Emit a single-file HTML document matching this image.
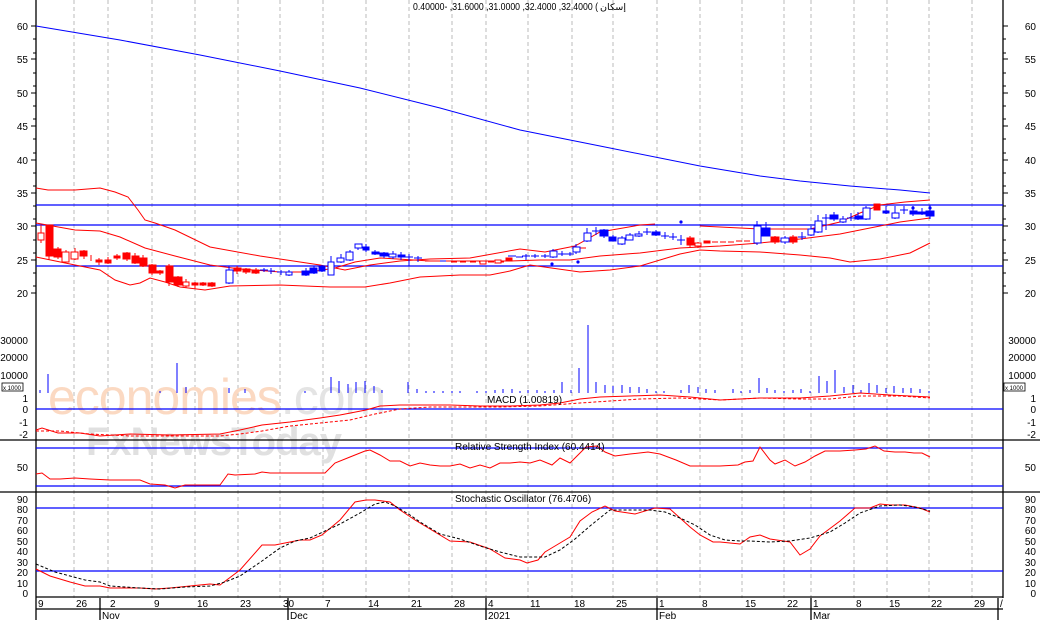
<!DOCTYPE html>
<html><head><meta charset="utf-8"><style>
html,body{margin:0;padding:0;background:#fff;width:1040px;height:620px;overflow:hidden}
svg{display:block}
text{font-family:"Liberation Sans","Noto Sans CJK SC",sans-serif;font-size:10px;fill:#000}
</style></head><body>
<svg width="1040" height="620" viewBox="0 0 1040 620" xmlns="http://www.w3.org/2000/svg">
<g stroke="#bbb" stroke-width="1" stroke-dasharray="4,3">
<line x1="74" y1="0" x2="74" y2="598"/><line x1="108" y1="0" x2="108" y2="598"/><line x1="152" y1="0" x2="152" y2="598"/><line x1="195" y1="0" x2="195" y2="598"/><line x1="238" y1="0" x2="238" y2="598"/><line x1="280" y1="0" x2="280" y2="598"/><line x1="323" y1="0" x2="323" y2="598"/><line x1="366" y1="0" x2="366" y2="598"/><line x1="409" y1="0" x2="409" y2="598"/><line x1="452" y1="0" x2="452" y2="598"/><line x1="486" y1="0" x2="486" y2="598"/><line x1="528" y1="0" x2="528" y2="598"/><line x1="572" y1="0" x2="572" y2="598"/><line x1="613" y1="0" x2="613" y2="598"/><line x1="657" y1="0" x2="657" y2="598"/><line x1="700" y1="0" x2="700" y2="598"/><line x1="742" y1="0" x2="742" y2="598"/><line x1="784" y1="0" x2="784" y2="598"/><line x1="811" y1="0" x2="811" y2="598"/><line x1="854" y1="0" x2="854" y2="598"/><line x1="887" y1="0" x2="887" y2="598"/><line x1="929" y1="0" x2="929" y2="598"/><line x1="972" y1="0" x2="972" y2="598"/>
</g>
<text x="48" y="414" style="font-size:50px;fill:#fbd9c2;letter-spacing:-1px">economies<tspan style="fill:#e4e4e4">.com</tspan></text>
<text x="86" y="455" style="font-size:40px;fill:#e0e0e0;font-weight:bold;letter-spacing:-1px">FxNewsToday</text>

<g stroke="#000" stroke-width="1.3" fill="none">
<line x1="36" y1="0" x2="36" y2="620"/>
<line x1="1003" y1="0" x2="1003" y2="598"/>
<line x1="0" y1="440" x2="1040" y2="440"/>
<line x1="0" y1="492" x2="1040" y2="492"/>
<line x1="36" y1="597" x2="1003" y2="597"/>
<line x1="36" y1="609" x2="1003" y2="609"/>
<line x1="100" y1="598" x2="100" y2="620"/><line x1="288" y1="598" x2="288" y2="620"/><line x1="486" y1="598" x2="486" y2="620"/><line x1="657" y1="598" x2="657" y2="620"/><line x1="811" y1="598" x2="811" y2="620"/><line x1="998" y1="598" x2="998" y2="620"/>
</g>
<g stroke="#000" stroke-width="1">
<path d="M31 26h5M31 59h5M31 93h5M31 126h5M31 160h5M31 193h5M31 226h5M31 260h5M31 293h5M1003 26h5M1003 59h5M1003 93h5M1003 126h5M1003 160h5M1003 193h5M1003 226h5M1003 260h5M1003 293h5"/>
<path d="M33 39h3M33 53h3M33 73h3M33 86h3M33 106h3M33 119h3M33 139h3M33 153h3M33 173h3M33 186h3M33 206h3M33 219h3M33 240h3M33 253h3M33 273h3M33 286h3M1003 39h3M1003 53h3M1003 73h3M1003 86h3M1003 106h3M1003 119h3M1003 139h3M1003 153h3M1003 173h3M1003 186h3M1003 206h3M1003 219h3M1003 240h3M1003 253h3M1003 273h3M1003 286h3"/>
</g>
<g text-anchor="end">
<text x="28" y="30">60</text><text x="28" y="63">55</text><text x="28" y="97">50</text><text x="28" y="130">45</text><text x="28" y="164">40</text><text x="28" y="197">35</text><text x="28" y="230">30</text><text x="28" y="264">25</text><text x="28" y="297">20</text>
<text x="1036" y="30">60</text><text x="1036" y="63">55</text><text x="1036" y="97">50</text><text x="1036" y="130">45</text><text x="1036" y="164">40</text><text x="1036" y="197">35</text><text x="1036" y="230">30</text><text x="1036" y="264">25</text><text x="1036" y="297">20</text>
<text x="28" y="344">30000</text><text x="28" y="361">20000</text><text x="28" y="379">10000</text>
<text x="28" y="402">1</text><text x="28" y="413">0</text><text x="28" y="426">-1</text><text x="28" y="438">-2</text>
<text x="28" y="471">50</text>
<text x="1036" y="344">30000</text><text x="1036" y="361">20000</text><text x="1036" y="379">10000</text>
<text x="1036" y="402">1</text><text x="1036" y="413">0</text><text x="1036" y="426">-1</text><text x="1036" y="438">-2</text>
<text x="1036" y="471">50</text>
</g>
<rect x="2" y="383" width="21" height="8" fill="#fff" stroke="#000" stroke-width="0.8"/><text x="3" y="390" style="font-size:6px">x 1000</text>
<rect x="1004" y="383" width="21" height="8" fill="#fff" stroke="#000" stroke-width="0.8"/><text x="1005" y="390" style="font-size:6px">x 1000</text>
<g text-anchor="end" style="font-size:9.5px">
<text x="28" y="503">90</text><text x="28" y="513">80</text><text x="28" y="524">70</text><text x="28" y="534">60</text><text x="28" y="545">50</text><text x="28" y="555">40</text><text x="28" y="566">30</text><text x="28" y="576">20</text><text x="28" y="587">10</text><text x="28" y="597">0</text>
<text x="1036" y="503">90</text><text x="1036" y="513">80</text><text x="1036" y="524">70</text><text x="1036" y="534">60</text><text x="1036" y="545">50</text><text x="1036" y="555">40</text><text x="1036" y="566">30</text><text x="1036" y="576">20</text><text x="1036" y="587">10</text><text x="1036" y="597">0</text>
</g>
<g style="font-size:10px">
<text x="38" y="607">9</text><text x="76" y="607">26</text><text x="110" y="607">2</text><text x="154" y="607">9</text><text x="197" y="607">16</text><text x="240" y="607">23</text><text x="283" y="607">30</text><text x="325" y="607">7</text><text x="368" y="607">14</text><text x="411" y="607">21</text><text x="454" y="607">28</text><text x="488" y="607">4</text><text x="530" y="607">11</text><text x="574" y="607">18</text><text x="616" y="607">25</text><text x="659" y="607">1</text><text x="702" y="607">8</text><text x="745" y="607">15</text><text x="787" y="607">22</text><text x="813" y="607">1</text><text x="856" y="607">8</text><text x="889" y="607">15</text><text x="931" y="607">22</text><text x="974" y="607">29</text><text x="1000" y="607">/</text>
<text x="102" y="619">Nov</text><text x="290" y="619">Dec</text><text x="488" y="619">2021</text><text x="659" y="619">Feb</text><text x="813" y="619">Mar</text>
</g>
<text x="413" y="10" textLength="185" lengthAdjust="spacingAndGlyphs">0.40000- ,31.6000 ,31.0000 ,32.4000 ,32.4000 (</text>
<text x="600" y="10" textLength="26" lengthAdjust="spacingAndGlyphs" style="font-family:'DejaVu Sans',sans-serif;font-size:9px">إسكان</text>

<g stroke="#0000ff" stroke-width="1.3">
<line x1="36" y1="205" x2="1003" y2="205"/><line x1="36" y1="225" x2="1003" y2="225"/><line x1="36" y1="266" x2="1003" y2="266"/>
<line x1="36" y1="409" x2="1003" y2="409"/>
<line x1="36" y1="448" x2="1003" y2="448"/><line x1="36" y1="486" x2="1003" y2="486"/>
<line x1="36" y1="508" x2="1003" y2="508"/><line x1="36" y1="571" x2="1003" y2="571"/>
</g>
<polyline fill="none" stroke="#0000ff" stroke-width="1" points="36,26 120,40 200,55 280,71 360,88 440,108 520,130 600,146 700,166 760,176 800,181 850,186 900,190 930,193"/>
<g fill="none" stroke="#ff0000" stroke-width="1">
<polyline points="36,188 48,190 75,190 100,188 115,192 128,197 138,210 145,220 155,223 175,230 210,247 260,256 300,262 320,265 345,270 370,265 400,261 430,259 470,258 520,249 545,252 575,246 600,232 640,225 655,224"/>
<polyline points="700,226 760,229 810,229 840,222 860,213 880,205 905,202 930,200"/>
<polyline points="36,223 75,230 100,231 120,237 145,248 175,256 210,265 240,269 280,272 310,272 335,268 355,262 380,258 430,261 470,261 510,261 540,260 570,260 600,256 640,253 680,248 720,246 760,243 800,239 840,234 870,228 900,222 930,218"/>
<polyline points="36,257 75,265 100,270 115,280 130,285 140,283 150,278 165,282 180,287 205,290 230,286 280,285 330,287 365,287 390,283 420,277 460,275 490,275 510,271 530,265 580,272 610,270 640,266 680,254 700,250 720,251 760,252 800,255 830,258 850,262 880,259 910,253 930,243"/>
</g>
<g stroke="#ff0000" stroke-width="1">
<path d="M41 225v18M49 225v35M58 247v12M66 250v12M75 248v12M84 250v9M91 255v6M99 258v7M108 257v7M117 254v6M127 252v9M135 253v11M143 255v12M152 264v11M160 270v5M169 264v22M178 276v11M186 279v9M195 282v7M203 282v4M212 282v5M237 266v8M246 268v6M256 268v6M690 236v12M698 242v6M775 236v8M793 235v9"/>
<rect x="38" y="233" width="6" height="7" fill="#fff"/>
<rect x="46" y="225" width="7" height="31" fill="#ff0000"/>
<rect x="54" y="249" width="7" height="8" fill="#ff0000"/>
<rect x="62" y="252" width="7" height="10" fill="#fff"/>
<rect x="71" y="252" width="7" height="7" fill="#fff"/>
<rect x="80" y="251" width="7" height="5" fill="#ff0000"/>
<rect x="96" y="260" width="6" height="2" fill="#ff0000"/>
<rect x="105" y="260" width="6" height="3" fill="#ff0000"/>
<rect x="114" y="256" width="6" height="2" fill="#ff0000"/>
<rect x="123" y="253" width="7" height="6" fill="#ff0000"/>
<rect x="132" y="256" width="7" height="7" fill="#ff0000"/>
<rect x="140" y="258" width="7" height="8" fill="#ff0000"/>
<rect x="149" y="265" width="7" height="8" fill="#ff0000"/>
<rect x="157" y="271" width="6" height="2" fill="#ff0000"/>
<rect x="166" y="266" width="7" height="16" fill="#ff0000"/>
<rect x="174" y="277" width="8" height="8" fill="#ff0000"/>
<rect x="183" y="282" width="6" height="4" fill="#fff"/>
<rect x="192" y="283" width="6" height="2" fill="#ff0000"/>
<rect x="200" y="283" width="6" height="2" fill="#ff0000"/>
<rect x="208" y="283" width="7" height="3" fill="#ff0000"/>
<rect x="234" y="268" width="7" height="3" fill="#ff0000"/>
<rect x="243" y="269" width="7" height="3" fill="#ff0000"/>
<rect x="252" y="270" width="7" height="3" fill="#ff0000"/>
<path d="M425 261h7M433 261h6M451 262h6M460 262h6M470 262h6M479 262h6M488 262h6M498 262h6M580 248h6"/>
<rect x="480" y="261" width="6" height="3" fill="#fff"/>
<rect x="495" y="260" width="6" height="3" fill="#fff"/>
<rect x="506" y="258" width="6" height="3" fill="#ff0000"/>
<rect x="687" y="238" width="7" height="7" fill="#ff0000"/>
<rect x="695" y="243" width="6" height="3" fill="#fff"/>
<rect x="704" y="241" width="6" height="2" fill="#ff0000"/>
<path d="M712 242h6M720 242h6M728 242h6M736 241h6M744 241h6"/>
<rect x="771" y="237" width="8" height="5" fill="#ff0000"/>
<rect x="790" y="237" width="7" height="5" fill="#ff0000"/>
<rect x="874" y="204" width="6" height="6" fill="#ff0000"/>
</g>
<g stroke="#0000ff" stroke-width="1">
<path d="M229 266v18M264 268v4M271 268v6M281 270v5M289 270v6M306 268v8M314 266v8M322 265v7M331 256v19M341 254v9M350 250v11M358 244v6M366 244v8M375 250v5M384 252v6M393 251v8M401 252v8M409 254v12M418 256v6M526 254v6M535 254v4M545 254v4M553 249v9M562 251v5M570 252v4M576 244v10M587 228v14M596 227v8M604 229v9M613 235v6M622 236v9M630 233v7M639 231v6M647 228v7M656 230v6M665 232v7M673 233v7M681 235v10M757 221v24M766 222v14M785 236v8M802 232v8M811 226v10M818 215v18M826 214v16M834 212v9M843 216v7M851 213v8M858 212v8M866 206v14M886 206v8M895 206v13M904 206v8M913 206v10M922 208v7M930 205v14"/>
<rect x="226" y="270" width="7" height="13" fill="#fff"/>
<path d="M260 270h8M268 271h7M277 272h8"/>
<rect x="286" y="272" width="6" height="3" fill="#fff"/>
<rect x="302" y="271" width="7" height="4" fill="#0000ff"/>
<rect x="310" y="268" width="7" height="5" fill="#0000ff"/>
<rect x="319" y="266" width="6" height="5" fill="#0000ff"/>
<rect x="328" y="262" width="6" height="13" fill="#fff"/>
<rect x="337" y="258" width="7" height="4" fill="#fff"/>
<rect x="346" y="252" width="7" height="8" fill="#fff"/>
<rect x="355" y="244" width="7" height="4" fill="#fff"/>
<rect x="363" y="247" width="6" height="3" fill="#0000ff"/>
<rect x="372" y="252" width="7" height="2" fill="#0000ff"/>
<rect x="380" y="253" width="8" height="3" fill="#0000ff"/>
<rect x="389" y="254" width="7" height="3" fill="#fff"/>
<rect x="398" y="255" width="7" height="2" fill="#0000ff"/>
<path d="M405 257h8M414 258h8M440 261h6M508 256h8M516 257h7M522 256h8M531 256h8M541 256h8M558 254h8M566 254h8M592 231h8M643 232h8M661 236h8M669 237h8M677 240h8M798 237h8M822 218h8M847 218h8M900 210h8"/>
<rect x="550" y="251" width="7" height="6" fill="#fff"/>
<rect x="573" y="247" width="7" height="5" fill="#fff"/>
<rect x="584" y="233" width="7" height="8" fill="#fff"/>
<rect x="600" y="230" width="8" height="6" fill="#0000ff"/>
<rect x="609" y="237" width="7" height="4" fill="#0000ff"/>
<rect x="618" y="238" width="7" height="6" fill="#fff"/>
<rect x="626" y="235" width="7" height="5" fill="#fff"/>
<rect x="635" y="234" width="7" height="2" fill="#fff"/>
<rect x="652" y="232" width="8" height="3" fill="#0000ff"/>
<rect x="754" y="226" width="7" height="17" fill="#fff"/>
<rect x="762" y="228" width="8" height="8" fill="#0000ff"/>
<rect x="781" y="238" width="8" height="4" fill="#fff"/>
<rect x="808" y="229" width="6" height="6" fill="#fff"/>
<rect x="815" y="221" width="7" height="11" fill="#fff"/>
<rect x="830" y="215" width="8" height="4" fill="#0000ff"/>
<rect x="840" y="219" width="6" height="3" fill="#fff"/>
<rect x="855" y="216" width="7" height="3" fill="#0000ff"/>
<rect x="863" y="208" width="7" height="11" fill="#fff"/>
<rect x="883" y="211" width="6" height="2" fill="#0000ff"/>
<rect x="892" y="213" width="7" height="5" fill="#fff"/>
<rect x="910" y="211" width="7" height="3" fill="#0000ff"/>
<rect x="918" y="212" width="8" height="2" fill="#0000ff"/>
<rect x="926" y="211" width="8" height="5" fill="#0000ff"/>
</g>
<g fill="#0000ff"><circle cx="552" cy="264" r="1.6"/><circle cx="578" cy="262" r="1.6"/><circle cx="681" cy="222" r="1.6"/><circle cx="913" cy="208" r="1.6"/><circle cx="930" cy="208" r="1.6"/></g>

<g stroke="#0000ff" stroke-width="1">
<path d="M40 393v-3M48 393v-19M160 393v-2M177 393v-30M186 393v-6M229 393v-5M245 393v-4M305 393v-2M331 393v-16M339 393v-12M348 393v-9M356 393v-11M365 393v-12M374 393v-7M382 393v-3M408 393v-11M417 393v-4M426 393v-2M434 393v-2M443 393v-2M452 393v-2M460 393v-2M477 393v-2M486 393v-2M495 393v-3M503 393v-4M512 393v-4M520 393v-2M528 393v-3M537 393v-3M545 393v-2M554 393v-3M562 393v-11M571 393v-3M579 393v-25M588 393v-68M596 393v-11M605 393v-8M613 393v-7M622 393v-8M630 393v-6M639 393v-6M647 393v-4M656 393v-2M664 393v-2M681 393v-3M689 393v-8M698 393v-6M706 393v-4M715 393v-3M733 393v-4M741 393v-2M750 393v-3M759 393v-15M767 393v-5M775 393v-3M784 393v-2M793 393v-3M801 393v-4M810 393v-2M819 393v-17M827 393v-12M835 393v-23M844 393v-6M853 393v-8M861 393v-3M869 393v-10M877 393v-8M886 393v-5M894 393v-7M903 393v-5M911 393v-5M920 393v-4M929 393v-2"/>
</g>
<polyline fill="none" stroke="#ff0000" stroke-width="1" points="36,430 42,428 58,433 80,433 100,436 130,434 170,435 220,434 240,430 262,425 290,422 320,418 340,415 366,410 380,406 400,405 420,405 450,405 480,406 510,406 540,405 560,403 580,399 600,397 630,396 660,395 690,397 720,400 760,398 800,398 830,396 860,393 890,395 930,397"/>
<polyline fill="none" stroke="#ff0000" stroke-width="1" stroke-dasharray="3,2" points="36,431 60,431 90,434 130,436 170,436 220,436 240,434 262,431 290,426 320,423 350,420 375,414 400,409 430,407 470,407 500,407 540,406 580,403 610,401 640,399 680,398 720,400 760,398 800,399 830,399 860,396 900,396 930,398"/>
<text x="487" y="403">MACD (1.00819)</text>
<polyline fill="none" stroke="#ff0000" stroke-width="1" points="36,474 42,473 50,479 60,479 75,478 90,479 110,480 140,480 150,484 165,485 175,488 185,485 200,485 220,485 228,474 235,475 255,474 262,472 270,473 290,473 310,473 325,473 335,463 350,457 365,451 370,450 380,455 390,461 400,461 410,466 420,463 430,465 440,466 450,466 460,464 470,468 480,465 490,468 500,463 510,463 520,462 530,463 540,460 552,465 560,458 570,463 578,455 586,447 597,446 605,452 615,456 630,454 648,452 660,454 676,460 690,466 700,466 720,466 738,465 745,462 753,461 760,447 770,460 775,464 785,460 795,466 805,462 815,456 825,451 840,451 855,450 866,449 875,446 884,451 895,452 905,452 914,453 922,453 930,457"/>
<text x="455" y="450">Relative Strength Index (60.4414)</text>
<polyline fill="none" stroke="#ff0000" stroke-width="1" points="36,569 50,576 70,582 85,586 100,586 110,588 140,588 155,589 170,588 190,586 210,584 220,585 240,570 262,545 275,545 290,542 300,540 310,540 322,535 340,520 355,502 366,500 375,500 390,502 400,510 415,520 430,529 450,541 470,542 490,549 505,558 520,560 527,563 538,560 545,552 560,543 570,537 580,521 592,512 605,506 615,511 635,514 655,508 670,509 680,518 690,527 700,535 713,542 720,542 740,544 750,537 760,535 770,539 790,542 800,555 810,549 820,536 840,521 855,508 870,508 880,504 890,505 905,505 920,508 930,512"/>
<polyline fill="none" stroke="#000" stroke-width="1" stroke-dasharray="3,2" points="36,564 55,572 70,576 85,580 100,582 110,586 140,588 160,589 185,587 210,586 225,582 240,576 262,561 280,548 295,541 310,538 323,532 340,524 360,513 375,504 385,502 395,506 410,515 420,522 440,534 460,539 480,546 500,552 520,557 530,557 545,557 560,550 575,539 590,526 610,510 630,510 650,510 665,512 680,518 695,525 710,535 725,540 740,541 750,541 770,542 790,541 810,538 830,532 845,523 860,513 880,506 900,505 915,507 930,511"/>
<text x="455" y="502">Stochastic Oscillator (76.4706)</text>
</svg>
</body></html>
